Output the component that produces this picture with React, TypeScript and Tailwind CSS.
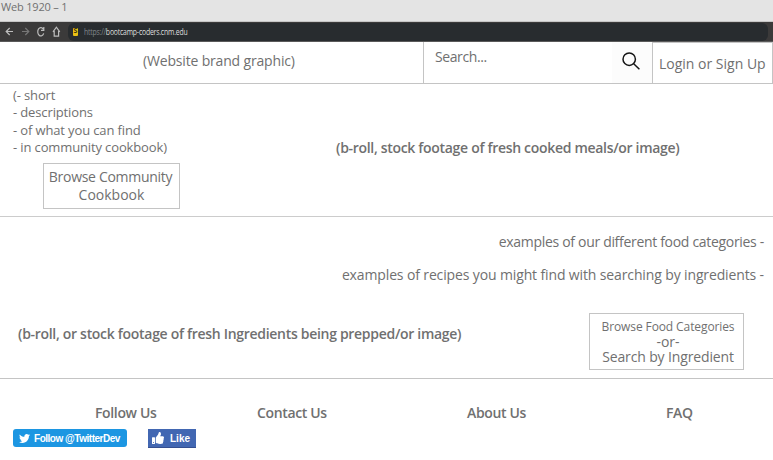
import React from "react";
import { FaThumbsUp, FaTwitter } from "react-icons/fa";

function BrowserBar() {
  return (
    <div className="flex h-[20px] items-center border-b border-[#5a5a5a] bg-[#3b3a3a] pl-[5px] pr-[5px]">
      <svg className="h-[18px] w-[63px] shrink-0" viewBox="0 0 63 18" fill="none" strokeWidth="1.2">
        <path d="M8 8.5H1.5M4.7 5L1.2 8.5L4.7 12" stroke="#bdbdbd" />
        <path d="M17 8.5H23.5M20.3 5L23.8 8.5L20.3 12" stroke="#777" />
        <path d="M38.3 6.2A3.1 4.2 0 1 0 38.7 10.4M38.8 3.9V7.4H36" stroke="#bdbdbd" />
        <path d="M48 8.8L51.4 4.2L54.8 8.8M49.2 8V13.2H53.6V8" stroke="#bdbdbd" />
      </svg>
      <div className="flex h-[18px] flex-1 items-center rounded-[6px] bg-[#282c2f] pl-[5px] font-['Open_Sans',sans-serif] text-[9px]">
        <span className="flex h-[8px] w-[5px] items-center justify-center rounded-[1px] bg-[#e8c014] text-[7px] font-bold text-[#3c3510]">S</span>
        <span className="ml-[6px] origin-left scale-x-[0.76] whitespace-nowrap tracking-[-0.24px] text-[#dedede]">
          <span className="text-[#82898d]">https://</span>
          <span className="font-medium">bootcamp-coders.cnm.edu</span>
        </span>
      </div>
    </div>
  );
}

function Header() {
  return (
    <header className="flex h-[42px] border-b border-[#c4c4c4] text-[14px]">
      <div className="w-[423px] pl-[143px] pt-[9px] leading-[20px] tracking-[-0.17px]">(Website brand graphic)</div>
      <div className="flex w-[229px] border-l border-[#c4c4c4]">
        <div className="flex-1 pl-[11px] pt-[5px] leading-[20px] tracking-[-0.4px]">Search...</div>
        <div className="flex w-[40px] justify-center bg-[#fcfcfc]">
          <svg className="mr-[2px] mt-[8px] h-[22px] w-[22px]" viewBox="0 0 22 22" fill="none" stroke="#151515" strokeWidth="1.5">
            <circle cx="9.2" cy="9.2" r="6.2" />
            <path d="M13.7 13.7L19.4 19.2" />
          </svg>
        </div>
      </div>
      <div className="flex-1 border-x border-t border-[#c4c4c4] pl-[6px] pt-[11px] leading-[20px]">Login or Sign Up</div>
    </header>
  );
}

function Community() {
  return (
    <section className="flex h-[133px] border-b border-[#cccccc]">
      <div className="w-[336px] pt-[3px]">
        <div className="pl-[13px] text-[13px] leading-[17.4px] tracking-[-0.13px]">
          <div>(- short</div>
          <div>- descriptions</div>
          <div>- of what you can find</div>
          <div>- in community cookbook)</div>
        </div>
        <button className="ml-[43px] mt-[6px] block h-[46px] w-[137px] border border-[#c4c4c4] text-center text-[14px] leading-[18px] tracking-[-0.3px]">
          <span className="block whitespace-nowrap pr-[2px]">Browse Community</span>
          <span className="block tracking-normal">Cookbook</span>
        </button>
      </div>
      <div className="pt-[54px] text-[14px] font-semibold leading-[20px] tracking-[-0.31px]">
        (b-roll, stock footage of fresh cooked meals/or image)
      </div>
    </section>
  );
}

function Ingredients() {
  return (
    <section className="h-[162px] border-b border-[#c4c4c4] pr-[9px] pt-[15px]">
      <div className="text-right text-[14px] leading-[20px]">
        <div className="tracking-[-0.31px]">examples of our different food categories -</div>
        <div className="mt-[13px] tracking-[-0.13px]">examples of recipes you might find with searching by ingredients -</div>
      </div>
      <div className="mt-[28px] flex justify-between pl-[18px] pr-[20px]">
        <div className="pt-[11px] text-[14px] font-semibold leading-[20px] tracking-[-0.3px]">
          (b-roll, or stock footage of fresh Ingredients being prepped/or image)
        </div>
        <button className="h-[57px] w-[155px] border border-[#c4c4c4] pl-[3px] text-center text-[14px] leading-[15px]">
          <span className="block text-[12px] tracking-[-0.1px]">Browse Food Categories</span>
          <span className="block">-or-</span>
          <span className="block tracking-[-0.14px]">Search by Ingredient</span>
        </button>
      </div>
    </section>
  );
}

function Footer() {
  return (
    <footer className="h-[81px] pt-[24px]">
      <div className="flex text-[14px] font-semibold leading-[20px] tracking-[-0.35px]">
        <div className="w-[257px] pl-[95px]">Follow Us</div>
        <div className="w-[210px]">Contact Us</div>
        <div className="w-[199px]">About Us</div>
        <div>FAQ</div>
      </div>
      <div className="mt-[6px] flex pl-[13px] font-['Liberation_Sans',Arial,sans-serif] font-bold text-white">
        <div className="flex h-[18px] w-[114px] items-center rounded-[3px] bg-[#1c96e2] pl-[6px] text-[10px]">
          <FaTwitter className="mr-[4px] h-[11px] w-[11px] shrink-0" />
          <span className="whitespace-nowrap tracking-[-0.48px]">Follow @TwitterDev</span>
        </div>
        <div className="ml-[21px] flex h-[19px] w-[48px] items-center border-b border-[#354f90] bg-[#4267b2] pl-[4px] text-[10px]">
          <FaThumbsUp className="mr-[6px] h-[12px] w-[12px] shrink-0" />
          <span>Like</span>
        </div>
      </div>
    </footer>
  );
}

export default function App() {
  return (
    <main className="h-[460px] w-[773px] overflow-hidden bg-white font-['Open_Sans',sans-serif] text-[#707070]">
      <div className="h-[22px] border-b border-[#c6c6c6] bg-[#e4e4e4] pl-[1px] text-[11px] leading-[14px] tracking-[-0.18px]">Web 1920 – 1</div>
      <BrowserBar />
      <Header />
      <Community />
      <Ingredients />
      <Footer />
    </main>
  );
}
